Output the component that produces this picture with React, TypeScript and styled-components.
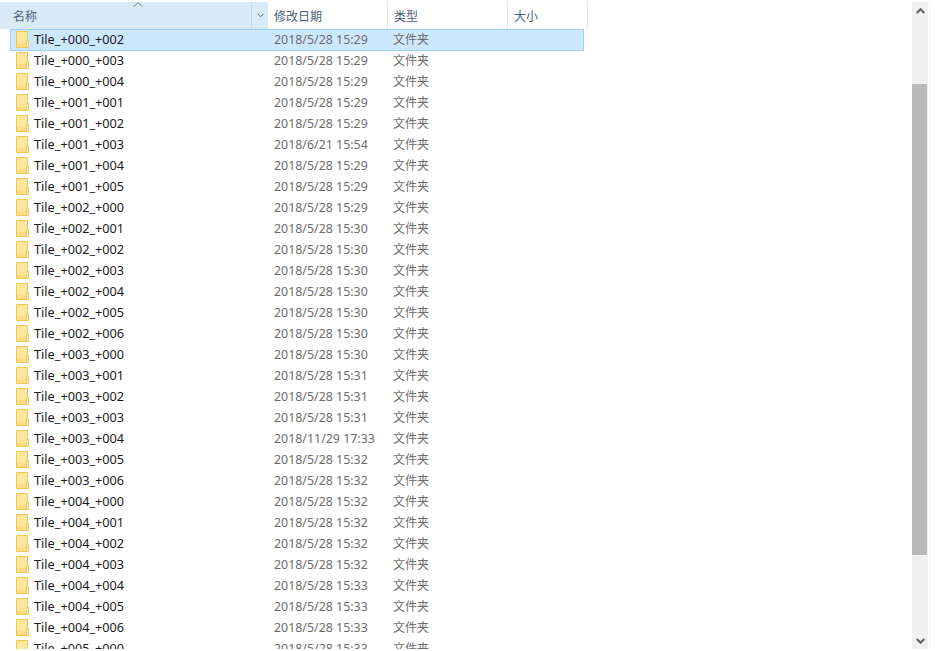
import styled, { createGlobalStyle } from "styled-components";

const FONT = `"Noto Sans", "Noto Sans CJK SC", sans-serif`;

const files: [string, string][] = [
  ["Tile_+000_+002", "2018/5/28 15:29"],
  ["Tile_+000_+003", "2018/5/28 15:29"],
  ["Tile_+000_+004", "2018/5/28 15:29"],
  ["Tile_+001_+001", "2018/5/28 15:29"],
  ["Tile_+001_+002", "2018/5/28 15:29"],
  ["Tile_+001_+003", "2018/6/21 15:54"],
  ["Tile_+001_+004", "2018/5/28 15:29"],
  ["Tile_+001_+005", "2018/5/28 15:29"],
  ["Tile_+002_+000", "2018/5/28 15:29"],
  ["Tile_+002_+001", "2018/5/28 15:30"],
  ["Tile_+002_+002", "2018/5/28 15:30"],
  ["Tile_+002_+003", "2018/5/28 15:30"],
  ["Tile_+002_+004", "2018/5/28 15:30"],
  ["Tile_+002_+005", "2018/5/28 15:30"],
  ["Tile_+002_+006", "2018/5/28 15:30"],
  ["Tile_+003_+000", "2018/5/28 15:30"],
  ["Tile_+003_+001", "2018/5/28 15:31"],
  ["Tile_+003_+002", "2018/5/28 15:31"],
  ["Tile_+003_+003", "2018/5/28 15:31"],
  ["Tile_+003_+004", "2018/11/29 17:33"],
  ["Tile_+003_+005", "2018/5/28 15:32"],
  ["Tile_+003_+006", "2018/5/28 15:32"],
  ["Tile_+004_+000", "2018/5/28 15:32"],
  ["Tile_+004_+001", "2018/5/28 15:32"],
  ["Tile_+004_+002", "2018/5/28 15:32"],
  ["Tile_+004_+003", "2018/5/28 15:32"],
  ["Tile_+004_+004", "2018/5/28 15:33"],
  ["Tile_+004_+005", "2018/5/28 15:33"],
  ["Tile_+004_+006", "2018/5/28 15:33"],
  ["Tile_+005_+000", "2018/5/28 15:33"],
];

function FolderIcon() {
  return (
    <Icon width="13" height="17" viewBox="0 0 13 17">
      <path d="M0.5 0.5H11.5V16.5H0.5Z" fill="#ffe79f" stroke="#efc84e" />
      <path d="M1 12H11V16H1Z" fill="#fedf85" />
      <path d="M10.5 9.5H12.5V16.5H10.5Z" fill="#fff2c4" stroke="#efc84e" />
    </Icon>
  );
}

function Chevron({ up }: { up?: boolean }) {
  return (
    <svg width="9" height="6" viewBox="0 0 9 6">
      <path
        d={up ? "M0.7 5L4.5 1.2L8.3 5" : "M0.7 1L4.5 4.8L8.3 1"}
        fill="none"
        stroke="#606060"
        strokeWidth="2"
      />
    </svg>
  );
}

export default function App() {
  return (
    <>
      <GlobalStyle />
      <Window>
        <Explorer>
          <Header>
            <NameHeader>
              <SortMark width="10" height="5" viewBox="0 0 10 5">
                <path d="M0.5 4.5L5 0.8L9.5 4.5" fill="none" stroke="#6d7a86" />
              </SortMark>
              名称
            </NameHeader>
            <HeaderDrop>
              <svg width="7" height="5" viewBox="0 0 7 5">
                <path d="M0.5 0.8L3.5 3.8L6.5 0.8" fill="none" stroke="#5c6670" />
              </svg>
            </HeaderDrop>
            <HeaderCell $width={120}>修改日期</HeaderCell>
            <HeaderCell $width={120}>类型</HeaderCell>
            <HeaderCell $width={80}>大小</HeaderCell>
          </Header>
          <List>
            {files.map(([name, date], i) => (
              <Row key={name} $selected={i === 0}>
                <FolderIcon />
                <Name>{name}</Name>
                <Date>{date}</Date>
                <Kind>文件夹</Kind>
              </Row>
            ))}
          </List>
        </Explorer>
        <Scrollbar>
          <ScrollButton>
            <Chevron up />
          </ScrollButton>
          <Track>
            <Thumb />
          </Track>
          <ScrollButton>
            <Chevron />
          </ScrollButton>
        </Scrollbar>
      </Window>
    </>
  );
}

const GlobalStyle = createGlobalStyle`
  html, body {
    margin: 0;
    background: #fff;
  }
`;

const Window = styled.div`
  display: flex;
  width: 936px;
  height: 647px;
  padding-top: 2px;
  overflow: hidden;
  font-family: ${FONT};
  font-size: 12px;
`;

const Explorer = styled.div`
  width: 912px;
  overflow: hidden;
`;

const Header = styled.div`
  display: flex;
  height: 27px;
`;

const NameHeader = styled.div`
  position: relative;
  display: flex;
  align-items: center;
  width: 252px;
  box-sizing: border-box;
  padding-left: 13px;
  background: #d9ebf9;
  border-right: 1px solid #bcdcf4;
  color: #4c607a;
`;

const SortMark = styled.svg`
  position: absolute;
  top: 0;
  left: 133px;
`;

const HeaderDrop = styled.div`
  display: flex;
  align-items: center;
  justify-content: center;
  width: 16px;
  background: #d9ebf9;
`;

const HeaderCell = styled.div<{ $width: number }>`
  display: flex;
  align-items: center;
  width: ${({ $width }) => $width}px;
  box-sizing: border-box;
  padding-left: 6px;
  border-right: 1px solid #e5e5e5;
  color: #4c607a;
`;

const List = styled.div`
  display: flex;
  flex-direction: column;
  padding-left: 10px;
`;

const Row = styled.div<{ $selected?: boolean }>`
  position: relative;
  display: flex;
  align-items: center;
  flex-shrink: 0;
  box-sizing: border-box;
  width: 574px;
  height: 21px;
  padding-left: 6px;

  &::before {
    content: "";
    display: ${({ $selected }) => ($selected ? "block" : "none")};
    position: absolute;
    inset: 0 0 -1px 0;
    background: #cce8ff;
    border: 1px solid #99d1ff;
  }

  > * {
    position: relative;
  }
`;

const Icon = styled.svg`
  flex-shrink: 0;
`;

const Name = styled.span`
  width: 240px;
  margin-left: 5px;
  padding-bottom: 2px;
  color: #1a1a1a;
  font-size: 12.7px;
  white-space: nowrap;
`;

const Date = styled.span`
  width: 119px;
  color: #6d6d6d;
  font-size: 12.4px;
  white-space: nowrap;
`;

const Kind = styled.span`
  color: #6d6d6d;
  line-height: 20px;
`;

const Scrollbar = styled.div`
  display: flex;
  flex-direction: column;
  width: 16px;
  height: 647px;
  background: #f0f0f0;
  box-shadow: 1px 0 0 #fff, 2px 0 0 #f4f4f4;
`;

const ScrollButton = styled.div`
  display: flex;
  align-items: center;
  justify-content: center;
  height: 17px;
`;

const Track = styled.div`
  flex: 1;
  padding-top: 65px;
`;

const Thumb = styled.div`
  width: 15px;
  height: 471px;
  background: #b9b9b9;
`;
